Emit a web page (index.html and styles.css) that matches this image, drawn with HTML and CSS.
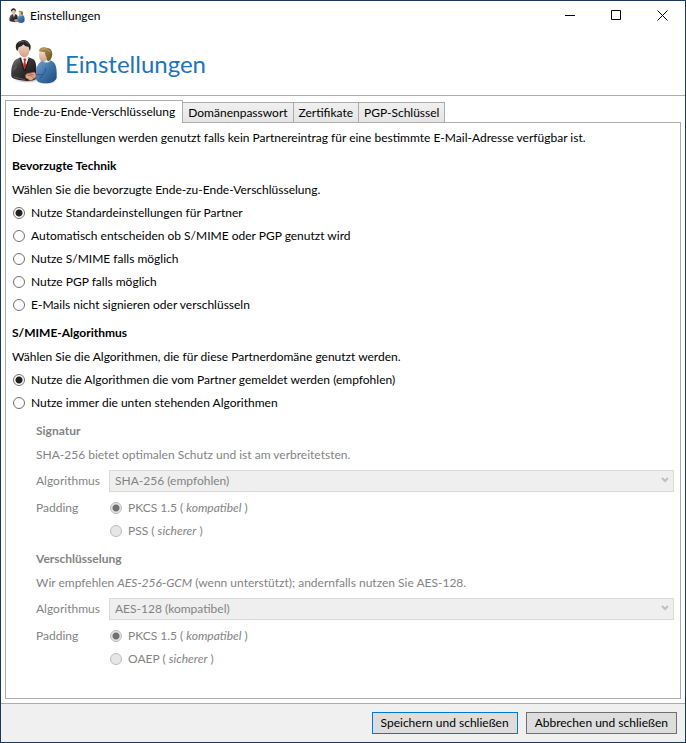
FILE: index.html
```html
<!DOCTYPE html>
<html lang="de">
<head>
    <meta charset="utf-8">
    <title>Einstellungen</title>
    <link rel="stylesheet" href="styles.css">
</head>
<body>
    <div class="window">
        <div class="titlebar">
            <svg class="app-icon" viewBox="18 12 144 144" aria-hidden="true"><use href="#partners"/></svg>
            <span class="caption">Einstellungen</span>
            <button class="control" aria-label="Minimieren"><svg width="11" height="11"><path d="M0 5.5H10"/></svg></button>
            <button class="control" aria-label="Maximieren"><svg width="11" height="11"><path d="M.5 .5H9.5V9.5H.5Z"/></svg></button>
            <button class="control" aria-label="Schließen"><svg width="11" height="11"><path d="M.5 .5L10.5 10.5M10.5 .5L.5 10.5"/></svg></button>
        </div>

        <header class="header">
            <svg class="logo" viewBox="18 12 144 144" aria-hidden="true">
                <defs>
                    <linearGradient id="suit" x1="0" y1="0" x2="1" y2="1">
                        <stop offset="0" stop-color="#8a8a8a"/>
                        <stop offset=".35" stop-color="#3c3c3c"/>
                        <stop offset="1" stop-color="#0c0c0c"/>
                    </linearGradient>
                    <linearGradient id="shirt" x1="0" y1="0" x2="1" y2="1">
                        <stop offset="0" stop-color="#7aa6d0"/>
                        <stop offset=".5" stop-color="#3e74aa"/>
                        <stop offset="1" stop-color="#1d4878"/>
                    </linearGradient>
                    <linearGradient id="skin" x1="0" y1="0" x2="0" y2="1">
                        <stop offset="0" stop-color="#f8e2d6"/>
                        <stop offset="1" stop-color="#d49c80"/>
                    </linearGradient>
                    <linearGradient id="hair" x1="0" y1="0" x2="1" y2="1">
                        <stop offset="0" stop-color="#b59a58"/>
                        <stop offset="1" stop-color="#6a501c"/>
                    </linearGradient>
                    <radialGradient id="shadow">
                        <stop offset="0" stop-color="#555"/>
                        <stop offset="1" stop-color="#fff" stop-opacity="0"/>
                    </radialGradient>
                    <g id="partners">
                        <ellipse cx="70" cy="136" rx="46" ry="9" fill="url(#shadow)"/>
                        <ellipse cx="128" cy="140" rx="36" ry="10" fill="url(#shadow)"/>
                        <path d="M22 124C20 98 26 78 38 72L53 66H72L88 73C96 78 99 96 97 132Q85 139 68 137C48 137 24 133 22 124Z" fill="url(#suit)"/>
                        <path d="M51 66L61 102L75 71L70 63H54Z" fill="#f4f4f4"/>
                        <path d="M58 71L64 70L67 74L64 79L67 96L61 104L57 92L60 79Z" fill="#d02c22"/>
                        <path d="M48 68L61 108M75 70L63 108" stroke="#181818" stroke-width="3" fill="none"/>
                        <path d="M42 40C40 26 52 21 62 22C73 23 79 31 76 43C77 55 71 66 61 67C51 67 44 56 42 40Z" fill="url(#skin)"/>
                        <path d="M40 49C31 35 36 21 49 18C57 12 70 15 75 24C83 31 80 43 77 49L74 35C69 37 61 32 57 28C56 34 48 35 44 37Z" fill="#252525"/>
                        <path d="M43 25Q51 17 60 20M62 19Q70 20 74 29" stroke="#777" stroke-width="2" fill="none"/>
                        <path d="M109 44C102 56 104 78 117 81L131 74L132 52Z" fill="url(#skin)"/>
                        <path d="M105 49C105 39 115 35 127 38C142 38 147 51 144 63C142 73 137 79 131 78C127 74 129 66 125 63L122 51Q114 52 105 49Z" fill="url(#hair)"/>
                        <path d="M112 43Q127 37 138 51" stroke="#d0b878" stroke-width="2" fill="none"/>
                        <path d="M116 76C121 84 133 84 139 76C153 81 160 92 158 129C153 145 121 149 102 140L92 128Q98 118 96 109C98 91 105 83 116 76Z" fill="url(#shirt)"/>
                        <path d="M116 77Q126 87 139 78" stroke="#a8c7e3" stroke-width="3" fill="none"/>
                        <path d="M95 119L117 119Q125 110 125 99M117 120L106 132" stroke="#1d4878" stroke-width="2" fill="none"/>
                        <path d="M64 121Q68 113 78 114L91 111Q98 116 96 126L84 136Q77 139 73 133L65 129Z" fill="#dda58a" stroke="#8b513a" stroke-width="2"/>
                        <path d="M70 120L81 122L89 129M76 116L90 120" stroke="#8b513a" stroke-width="2" fill="none"/>
                        <path d="M28 107Q33 96 39 95M30 126L63 134" stroke="#777" stroke-width="2" fill="none"/>
                    </g>
                </defs>
                <use href="#partners"/>
            </svg>
            <h1>Einstellungen</h1>
        </header>

        <main class="content">
            <div class="tabs" role="tablist">
                <button class="tab active" role="tab" aria-selected="true">Ende-zu-Ende-Verschlüsselung</button>
                <button class="tab" role="tab">Domänenpasswort</button>
                <button class="tab" role="tab">Zertifikate</button>
                <button class="tab" role="tab">PGP-Schlüssel</button>
            </div>

            <div class="panel" role="tabpanel">
                <p>Diese Einstellungen werden genutzt falls kein Partnereintrag für eine bestimmte E-Mail-Adresse verfügbar ist.</p>

                <h2>Bevorzugte Technik</h2>
                <p>Wählen Sie die bevorzugte Ende-zu-Ende-Verschlüsselung.</p>
                <div class="options">
                    <label class="option"><input type="radio" name="technik" checked>Nutze Standardeinstellungen für Partner</label>
                    <label class="option"><input type="radio" name="technik">Automatisch entscheiden ob S/MIME oder PGP genutzt wird</label>
                    <label class="option"><input type="radio" name="technik">Nutze S/MIME falls möglich</label>
                    <label class="option"><input type="radio" name="technik">Nutze PGP falls möglich</label>
                    <label class="option"><input type="radio" name="technik">E-Mails nicht signieren oder verschlüsseln</label>
                </div>

                <h2>S/MIME-Algorithmus</h2>
                <p>Wählen Sie die Algorithmen, die für diese Partnerdomäne genutzt werden.</p>
                <div class="options">
                    <label class="option"><input type="radio" name="algo" checked>Nutze die Algorithmen die vom Partner gemeldet werden (empfohlen)</label>
                    <label class="option"><input type="radio" name="algo">Nutze immer die unten stehenden Algorithmen</label>
                </div>

                <fieldset class="group" disabled>
                    <h2>Signatur</h2>
                    <p>SHA-256 bietet optimalen Schutz und ist am verbreitetsten.</p>
                    <div class="fields">
                        <label for="sig">Algorithmus</label>
                        <div class="select">
                            <select id="sig"><option>SHA-256 (empfohlen)</option></select>
                            <svg width="8" height="6"><path d="M1 1L4 4L7 1"/></svg>
                        </div>
                        <span id="sig-padding">Padding</span>
                        <div class="options" role="radiogroup" aria-labelledby="sig-padding">
                            <label class="option"><input type="radio" name="sigpad" checked><span>PKCS 1.5 ( <i>kompatibel</i> )</span></label>
                            <label class="option"><input type="radio" name="sigpad"><span>PSS ( <i>sicherer</i> )</span></label>
                        </div>
                    </div>
                </fieldset>

                <fieldset class="group" disabled>
                    <h2>Verschlüsselung</h2>
                    <p>Wir empfehlen <i>AES-256-GCM</i> (wenn unterstützt); andernfalls nutzen Sie AES-128.</p>
                    <div class="fields">
                        <label for="enc">Algorithmus</label>
                        <div class="select">
                            <select id="enc"><option>AES-128 (kompatibel)</option></select>
                            <svg width="8" height="6"><path d="M1 1L4 4L7 1"/></svg>
                        </div>
                        <span id="enc-padding">Padding</span>
                        <div class="options" role="radiogroup" aria-labelledby="enc-padding">
                            <label class="option"><input type="radio" name="encpad" checked><span>PKCS 1.5 ( <i>kompatibel</i> )</span></label>
                            <label class="option"><input type="radio" name="encpad"><span>OAEP ( <i>sicherer</i> )</span></label>
                        </div>
                    </div>
                </fieldset>
            </div>
        </main>

        <footer class="footer">
            <button class="button primary">Speichern und schließen</button>
            <button class="button">Abbrechen und schließen</button>
        </footer>
    </div>
</body>
</html>
```
FILE: styles.css
```css
* {
    box-sizing: border-box;
}
body {
    margin: 0;
    font: 12px/16px Lato, sans-serif;
    color: #000;
}
button, select {
    font: inherit;
    color: inherit;
}
h1, h2, p {
    margin: 0;
}
.window {
    display: flex;
    flex-direction: column;
    min-height: 100vh;
    border: 1px solid #173a5a;
    background-color: #fff;
}

/* title bar */
.titlebar {
    display: flex;
    align-items: center;
    height: 29px;
    padding-left: 8px;
}
.app-icon {
    width: 16px;
    height: 16px;
}
.caption {
    flex: 1;
    margin-left: 5px;
}
.control {
    display: flex;
    align-items: center;
    justify-content: center;
    width: 46px;
    height: 29px;
    padding: 0;
    border: none;
    background: none;
}
.control path {
    fill: none;
    stroke: #000;
}

/* header */
.header {
    display: flex;
    align-items: center;
    gap: 7px;
    height: 66px;
    padding-left: 9px;
    border-bottom: 1px solid #acacac;
}
.logo {
    width: 48px;
    height: 48px;
}
h1 {
    padding-top: 2px;
    font-size: 24px;
    line-height: 32px;
    font-weight: 400;
    color: #1c74bc;
}

/* tabs */
.content {
    flex: 1;
    display: flex;
    flex-direction: column;
    padding: 4px;
}
.tabs {
    display: flex;
    align-items: flex-end;
}
.tab {
    height: 20px;
    margin-left: -1px;
    padding: 0 5px;
    border: 1px solid #acacac;
    border-bottom: none;
    background: linear-gradient(#f0f0f0, #e5e5e5);
}
.tab.active {
    position: relative;
    height: 23px;
    margin: 0 0 -1px;
    padding: 0 7px;
    background: #fff;
}
.panel {
    flex: 1;
    padding: 7px 6px;
    border: 1px solid #acacac;
}
h2 {
    margin: 12px 0 8px;
    font-size: 12px;
    line-height: 16px;
    font-weight: 700;
}
.options {
    display: grid;
    gap: 7px;
}
p + .options {
    margin-top: 7px;
}
.option {
    display: flex;
    align-items: center;
    gap: 6px;
}
input[type="radio"] {
    appearance: none;
    width: 12px;
    height: 12px;
    margin: 0 0 0 1px;
    border: 1px solid #707070;
    border-radius: 50%;
    background-color: #fff;
}
input[type="radio"]:checked {
    background-image: radial-gradient(circle, #212121 3px, transparent 4px);
}

/* disabled groups */
.group {
    min-width: 0;
    margin: 12px 0 0;
    padding: 0 0 0 24px;
    border: none;
    color: #838383;
}
.group h2 {
    margin-top: 0;
}
.group input[type="radio"] {
    border-color: #bcbcbc;
    background-color: #e6e6e6;
}
.group input[type="radio"]:checked {
    background-image: radial-gradient(circle, #707070 3px, transparent 4px);
}
.fields {
    display: grid;
    grid-template-columns: 66px 1fr;
    gap: 8px 7px;
    margin-top: 7px;
}
.fields > label {
    line-height: 22px;
}
.select {
    position: relative;
}
.select select {
    appearance: none;
    display: block;
    width: 100%;
    height: 22px;
    padding: 0 5px;
    border: 1px solid #d9d9d9;
    border-radius: 0;
    background-color: #efefef;
    color: inherit;
    opacity: 1;
}
.select svg {
    position: absolute;
    top: 7px;
    right: 5px;
    pointer-events: none;
}
.select path {
    fill: none;
    stroke: #bfbfbf;
    stroke-width: 2;
}

/* footer */
.footer {
    display: flex;
    justify-content: flex-end;
    gap: 8px;
    padding: 8px;
    border-top: 1px solid #acacac;
    background-color: #f0f0f0;
}
.button {
    height: 22px;
    padding: 0 8px;
    border: 1px solid #707070;
    background-color: #ddd;
}
.button.primary {
    border-color: #0078d7;
}
```
